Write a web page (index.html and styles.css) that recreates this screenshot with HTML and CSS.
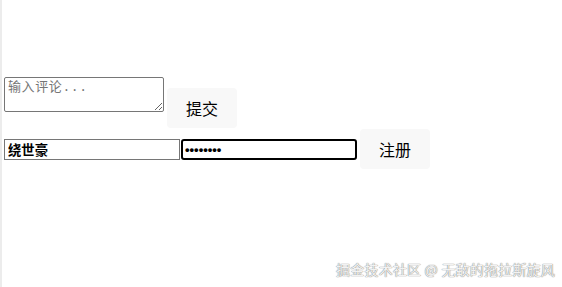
FILE: index.html
```html
<!DOCTYPE html>
<html lang="zh">
<head>
<meta charset="utf-8">
<link rel="stylesheet" href="styles.css">
</head>
<body>
<div class="page">
  <div class="row row-comment">
    <textarea class="comment" placeholder="输入评论..."></textarea>
    <button class="btn">提交</button>
  </div>
  <div class="row row-register">
    <input class="field" type="text" value="绕世豪"><input class="field field-focus" type="password" value="12345678">
    <button class="btn">注册</button>
  </div>
</div>
<div class="watermark">掘金技术社区 @ 无敌的拖拉斯旋风</div>
</body>
</html>
```
FILE: styles.css
```css
html, body {
  margin: 0;
  height: 100%;
  background: #fff;
}
body {
  border-left: 2px solid #ececec;
  box-sizing: border-box;
  position: relative;
  font-family: "Noto Sans CJK SC", sans-serif;
}
.page {
  padding: 77px 0 0 2px;
}
.row {
  display: flex;
  align-items: flex-start;
}
.comment {
  width: 160px;
  height: 35px;
  box-sizing: border-box;
  margin: 0;
  border: 1px solid #767676;
  border-radius: 2px;
  padding: 2px 3px;
  font-family: "Liberation Mono", "Noto Sans CJK SC", monospace;
  font-size: 13px;
  line-height: 16px;
  letter-spacing: 0.6px;
  resize: both;
}
.comment::placeholder {
  color: #757575;
}
.row-comment .btn {
  margin-top: 11px;
  margin-left: 3px;
}
.btn {
  width: 70px;
  height: 40px;
  border: none;
  border-radius: 4px;
  background: #f8f8f8;
  color: #000;
  font-family: "Noto Sans CJK SC", sans-serif;
  font-size: 16px;
  padding: 0;
  cursor: pointer;
}
.row-register {
  margin-top: 1px;
}
.row-register .field {
  margin-top: 10px;
}
.row-register .btn {
  margin-left: 3px;
}
.field {
  width: 176px;
  height: 21px;
  box-sizing: border-box;
  margin: 0;
  border: 1px solid #767676;
  padding: 1px 3px;
  font-family: "Noto Sans CJK SC", sans-serif;
  font-size: 13.33px;
  font-weight: 700;
  color: #000;
}
.field-focus {
  margin-left: 1px !important;
  border: 2px solid #000;
  border-radius: 3px;
  outline: none;
  font-family: "Liberation Sans", sans-serif;
  font-size: 13px;
  padding: 1px 2px;
}
.watermark {
  position: absolute;
  right: 7px;
  bottom: 8px;
  font-family: "Noto Sans CJK SC", sans-serif;
  font-size: 14px;
  color: #f2f2f2;
  text-shadow: 0 0 1px #7a7a7a, 0 0 1px #999;
  letter-spacing: 0.2px;
}
```
